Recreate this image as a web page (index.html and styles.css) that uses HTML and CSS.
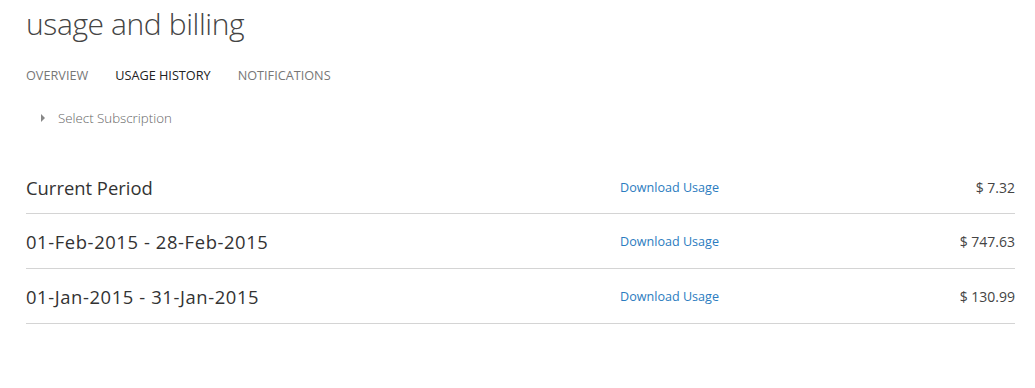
FILE: index.html
```html
<!DOCTYPE html>
<html lang="en">
<head>
    <meta charset="UTF-8">
    <meta name="viewport" content="width=device-width, initial-scale=1.0">
    <title>usage and billing</title>
    <link rel="stylesheet" href="styles.css">
</head>
<body>
    <main class="page">
        <h1 class="title">usage and billing</h1>
        <nav class="tabs">
            <a href="#">Overview</a>
            <a href="#" class="active">Usage History</a>
            <a href="#">Notifications</a>
        </nav>
        <div class="subscription">
            <span class="caret"></span>
            <span>Select Subscription</span>
        </div>
        <ul class="periods">
            <li class="period">
                <span class="period-name">Current Period</span>
                <a href="#" class="download">Download Usage</a>
                <span class="amount">$ 7.32</span>
            </li>
            <li class="period">
                <span class="period-name date">01-Feb-2015 - 28-Feb-2015</span>
                <a href="#" class="download">Download Usage</a>
                <span class="amount">$ 747.63</span>
            </li>
            <li class="period">
                <span class="period-name date">01-Jan-2015 - 31-Jan-2015</span>
                <a href="#" class="download">Download Usage</a>
                <span class="amount">$ 130.99</span>
            </li>
        </ul>
    </main>
</body>
</html>
```

FILE: styles.css
```css
body { font-family: "Open Sans", sans-serif; margin: 0; padding: 0; background-color: #fff; color: #333; }
.page { padding: 0 20px 0 26px; }
.title { margin: 0; padding-top: 4px; font-size: 30px; font-weight: 300; color: #444; line-height: 40px; letter-spacing: -0.4px; }
.tabs { display: flex; gap: 27px; margin-top: 21px; }
.tabs a { font-size: 12.7px; text-transform: uppercase; color: #777; text-decoration: none; line-height: 20px; }
.tabs a.active { color: #222; }
.subscription { display: flex; align-items: center; gap: 13px; margin-top: 23px; padding-left: 15px; font-size: 13.3px; font-weight: 300; color: #666; line-height: 20px; }
.caret { width: 0; height: 0; border-top: 4px solid transparent; border-bottom: 4px solid transparent; border-left: 4px solid #888; }
.periods { list-style: none; padding: 0; margin: 33px 0 0; }
.period { display: grid; grid-template-columns: 594px 1fr auto; align-items: center; height: 54px; border-bottom: 1px solid #d4d4d4; }
.period:first-child { height: 52px; }
.period-name { font-size: 18.4px; color: #333; }
.period-name.date { letter-spacing: 0.6px; }
.download { font-size: 12.6px; color: #2b7cc0; text-decoration: none; }
.amount { font-size: 14px; color: #444; }
```
